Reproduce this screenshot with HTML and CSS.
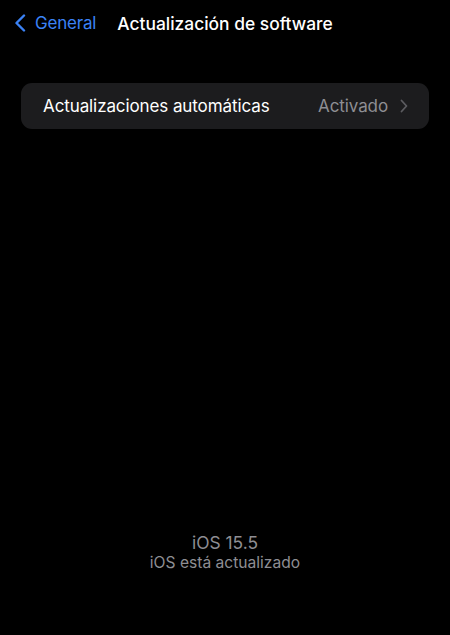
FILE: index.html
```html
<!DOCTYPE html>
<html lang="es">
<head>
<meta charset="utf-8">
<link rel="stylesheet" href="styles.css">
</head>
<body>
<div class="screen">
  <header class="nav">
    <a class="back">
      <svg class="back-icon" width="12" height="18" viewBox="0 0 12 18"><path d="M10 1.5 L2.5 9 L10 16.5" fill="none" stroke="currentColor" stroke-width="2.4" stroke-linecap="round" stroke-linejoin="round"/></svg>
      <span>General</span>
    </a>
    <h1 class="title">Actualización de software</h1>
    <span></span>
  </header>
  <section class="card">
    <div class="row">
      <span class="row-label">Actualizaciones automáticas</span>
      <span class="row-value">Activado</span>
      <svg class="chev" width="8" height="14" viewBox="0 0 8 14"><path d="M1.5 1.5 L6.5 7 L1.5 12.5" fill="none" stroke="currentColor" stroke-width="1.8" stroke-linecap="round" stroke-linejoin="round"/></svg>
    </div>
  </section>
  <footer class="status">
    <div class="version">iOS 15.5</div>
    <div class="state">iOS está actualizado</div>
  </footer>
</div>
</body>
</html>
```
FILE: styles.css
```css
html, body {
  margin: 0;
  padding: 0;
  background: #000;
}
body {
  font-family: Inter, "Noto Sans", "Liberation Sans", sans-serif;
  color: #fff;
}
.screen {
  height: 635px;
  display: flex;
  flex-direction: column;
}
.nav {
  height: 46px;
  display: grid;
  grid-template-columns: 1fr auto 1fr;
  align-items: center;
}
.back {
  display: flex;
  align-items: center;
  gap: 9px;
  padding-left: 14px;
  color: #3b82f6;
  font-size: 17px;
  letter-spacing: -0.2px;
}
.back-icon {
  display: block;
}
.title {
  margin: 0;
  font-size: 17.4px;
  font-weight: 500;
  letter-spacing: 0;
}
.card {
  margin: 37px 21px 0;
  background: #1c1c1e;
  border-radius: 11px;
}
.row {
  height: 46px;
  display: flex;
  align-items: center;
  padding: 0 21px 0 22px;
}
.row-label {
  flex: 1;
  font-size: 17px;
  letter-spacing: -0.1px;
}
.row-value {
  font-size: 17px;
  color: #8e8e93;
  letter-spacing: -0.1px;
  margin-right: 12px;
}
.chev {
  display: block;
  color: #5c5c60;
}
.status {
  margin-top: auto;
  padding-bottom: 62px;
  text-align: center;
  color: #8e8e93;
  font-size: 15.6px;
  line-height: 20px;
}
.version {
  font-size: 17.4px;
}
```
